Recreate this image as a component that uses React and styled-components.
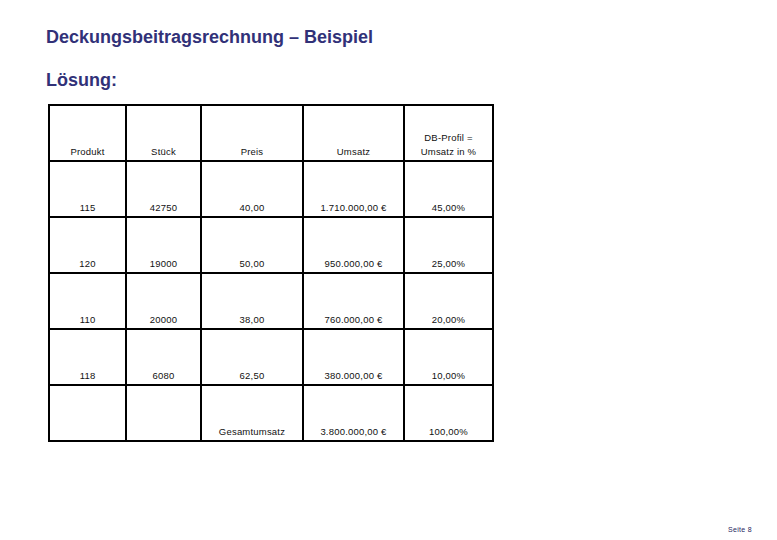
import styled, { createGlobalStyle } from 'styled-components';

const GlobalStyle = createGlobalStyle`
  html, body {
    margin: 0;
    padding: 0;
    background: #ffffff;
  }
`;

const Page = styled.div`
  box-sizing: border-box;
  display: flex;
  flex-direction: column;
  width: 777px;
  height: 540px;
  padding: 27px 0 0 46px;
  font-family: 'Liberation Sans', Arial, sans-serif;
`;

const Title = styled.h1`
  margin: 0;
  font-size: 18px;
  line-height: 20px;
  font-weight: bold;
  color: #313178;
`;

const SubTitle = styled.h2`
  margin: 23px 0 0;
  font-size: 18px;
  line-height: 20px;
  font-weight: bold;
  color: #313178;
`;

const Table = styled.table`
  margin: 14px 0 0 2px;
  border-collapse: collapse;
  table-layout: fixed;
  width: 444px;
  color: #111;
  font-size: 9.5px;
  letter-spacing: 0.2px;
`;

const Cell = styled.td`
  height: 53px;
  padding: 0 2px 1px;
  border: 2px solid #000;
  text-align: center;
  vertical-align: bottom;
  line-height: 14px;
`;

const Footer = styled.div`
  margin-top: auto;
  align-self: flex-end;
  padding: 0 25px 7px 0;
  font-size: 7px;
  letter-spacing: 0.3px;
  color: #262660;
`;

const widths = [77, 75, 102, 101, 89];

const header = ['Produkt', 'Stück', 'Preis', 'Umsatz', 'DB-Profil =\nUmsatz in %'];

const rows = [
  ['115', '42750', '40,00', '1.710.000,00 €', '45,00%'],
  ['120', '19000', '50,00', '950.000,00 €', '25,00%'],
  ['110', '20000', '38,00', '760.000,00 €', '20,00%'],
  ['118', '6080', '62,50', '380.000,00 €', '10,00%'],
  ['', '', 'Gesamtumsatz', '3.800.000,00 €', '100,00%'],
];

const App = () => (
  <>
    <GlobalStyle />
    <Page>
      <Title>Deckungsbeitragsrechnung – Beispiel</Title>
      <SubTitle>Lösung:</SubTitle>
      <Table>
        <colgroup>
          {widths.map((w, i) => (
            <col key={i} style={{ width: w }} />
          ))}
        </colgroup>
        <tbody>
          <tr>
            {header.map((h, i) => (
              <Cell key={i}>
                {h.split('\n').map((line, j) => (
                  <div key={j}>{line}</div>
                ))}
              </Cell>
            ))}
          </tr>
          {rows.map((row, r) => (
            <tr key={r}>
              {row.map((c, i) => (
                <Cell key={i}>{c}</Cell>
              ))}
            </tr>
          ))}
        </tbody>
      </Table>
      <Footer>Seite 8</Footer>
    </Page>
  </>
);

export default App;
